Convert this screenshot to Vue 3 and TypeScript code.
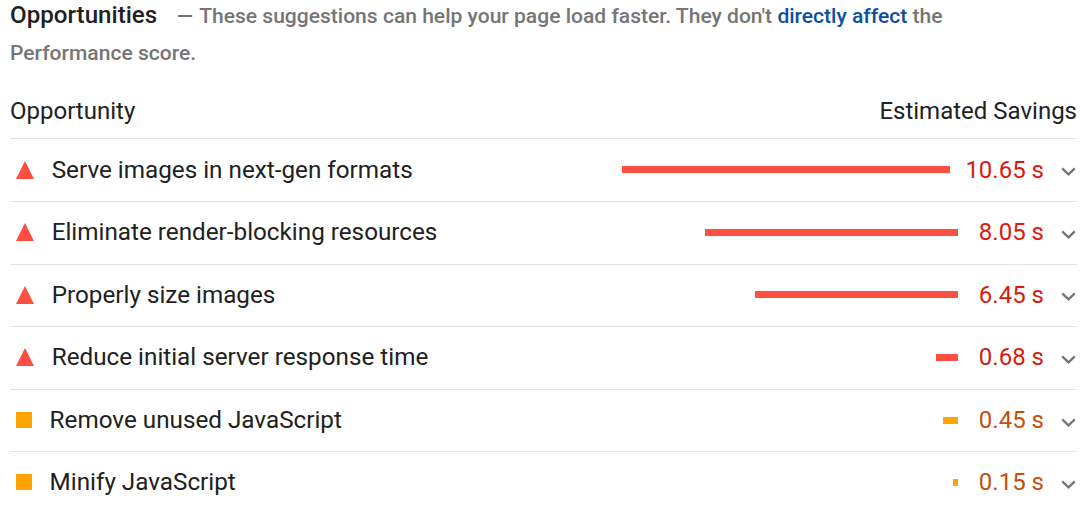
<script setup lang="ts">
interface Row { title: string; value: string; bar: number; level: 'fail' | 'average' }
const rows: Row[] = [
  { title: 'Serve images in next-gen formats', value: '10.65 s', bar: 328, level: 'fail' },
  { title: 'Eliminate render-blocking resources', value: '8.05 s', bar: 253, level: 'fail' },
  { title: 'Properly size images', value: '6.45 s', bar: 203, level: 'fail' },
  { title: 'Reduce initial server response time', value: '0.68 s', bar: 22, level: 'fail' },
  { title: 'Remove unused JavaScript', value: '0.45 s', bar: 15, level: 'average' },
  { title: 'Minify JavaScript', value: '0.15 s', bar: 5, level: 'average' },
]
</script>

<template>
  <main class="page">
    <header class="head">
      <span class="title">Opportunities</span>
      <span class="dash">—</span>
      These suggestions can help your page load faster. They don't
      <a class="link">directly affect</a> the Performance score.
    </header>
    <div class="columns">
      <span>Opportunity</span>
      <span>Estimated Savings</span>
    </div>
    <section v-for="row in rows" :key="row.title" class="row" :class="row.level">
      <svg v-if="row.level === 'fail'" class="icon tri" viewBox="0 0 18 18" aria-hidden="true">
        <polygon points="9,0 18,18 0,18" />
      </svg>
      <span v-else class="icon square"></span>
      <span class="name">{{ row.title }}</span>
      <span class="track"><span class="bar" :style="{ width: row.bar + 'px' }"></span></span>
      <span class="value">{{ row.value }}</span>
      <svg class="chev" viewBox="0 0 15 9" aria-hidden="true">
        <path d="M1.2 1.4 7.5 7.4 13.8 1.4" />
      </svg>
    </section>
  </main>
</template>

<style>
html, body { margin: 0; background: #fff; }
</style>

<style scoped>
.page {
  box-sizing: border-box;
  width: 1090px;
  height: 511px;
  padding: 0 13px 0 10px;
  overflow: hidden;
  font-family: Roboto, "Liberation Sans", sans-serif;
  color: #212121;
}
.head {
  width: 960px;
  font-size: 21.05px;
  font-weight: 500;
  line-height: 37.5px;
  margin-top: -3.4px;
  color: #757575;
}
.title { font-size: 24.15px; color: #212121; }
.dash { margin-left: 19.5px; margin-right: 1.5px; }
.link { color: #0b4f9e; }
.columns {
  display: flex;
  justify-content: space-between;
  align-items: center;
  height: 67.8px;
  padding-top: 12.8px;
  font-size: 24px;
  border-bottom: 1px solid #e4e4e4;
  box-sizing: border-box;
}
.row {
  display: flex;
  align-items: center;
  box-sizing: border-box;
  height: 62.6px;
  padding-bottom: 1px;
  border-bottom: 1px solid #e4e4e4;
  font-size: 24px;
}
.row:last-child { border-bottom: 0; padding-bottom: 3px; }
.icon { flex: none; display: block; margin-left: 6px; }
.tri { width: 18px; height: 18px; fill: #ff4e42; margin-right: 17.7px; }
.square { width: 16px; height: 16px; background: #ffa400; margin-right: 17.6px; }
.name { flex: none; font-size: 24.25px; }
.track { flex: 1; display: flex; justify-content: flex-end; }
.bar { display: block; height: 7px; background: #ff4e42; }
.average .bar { background: #ffa400; }
.value {
  flex: none;
  box-sizing: border-box;
  min-width: 86px;
  padding-left: 15px;
  text-align: right;
  color: #d91a0c;
}
.average .value { color: #c4500c; }
.chev {
  flex: none;
  width: 15px;
  height: 9px;
  margin: 4px 1px 0 17px;
  fill: none;
  stroke: #757575;
  stroke-width: 2.3;
}
</style>
